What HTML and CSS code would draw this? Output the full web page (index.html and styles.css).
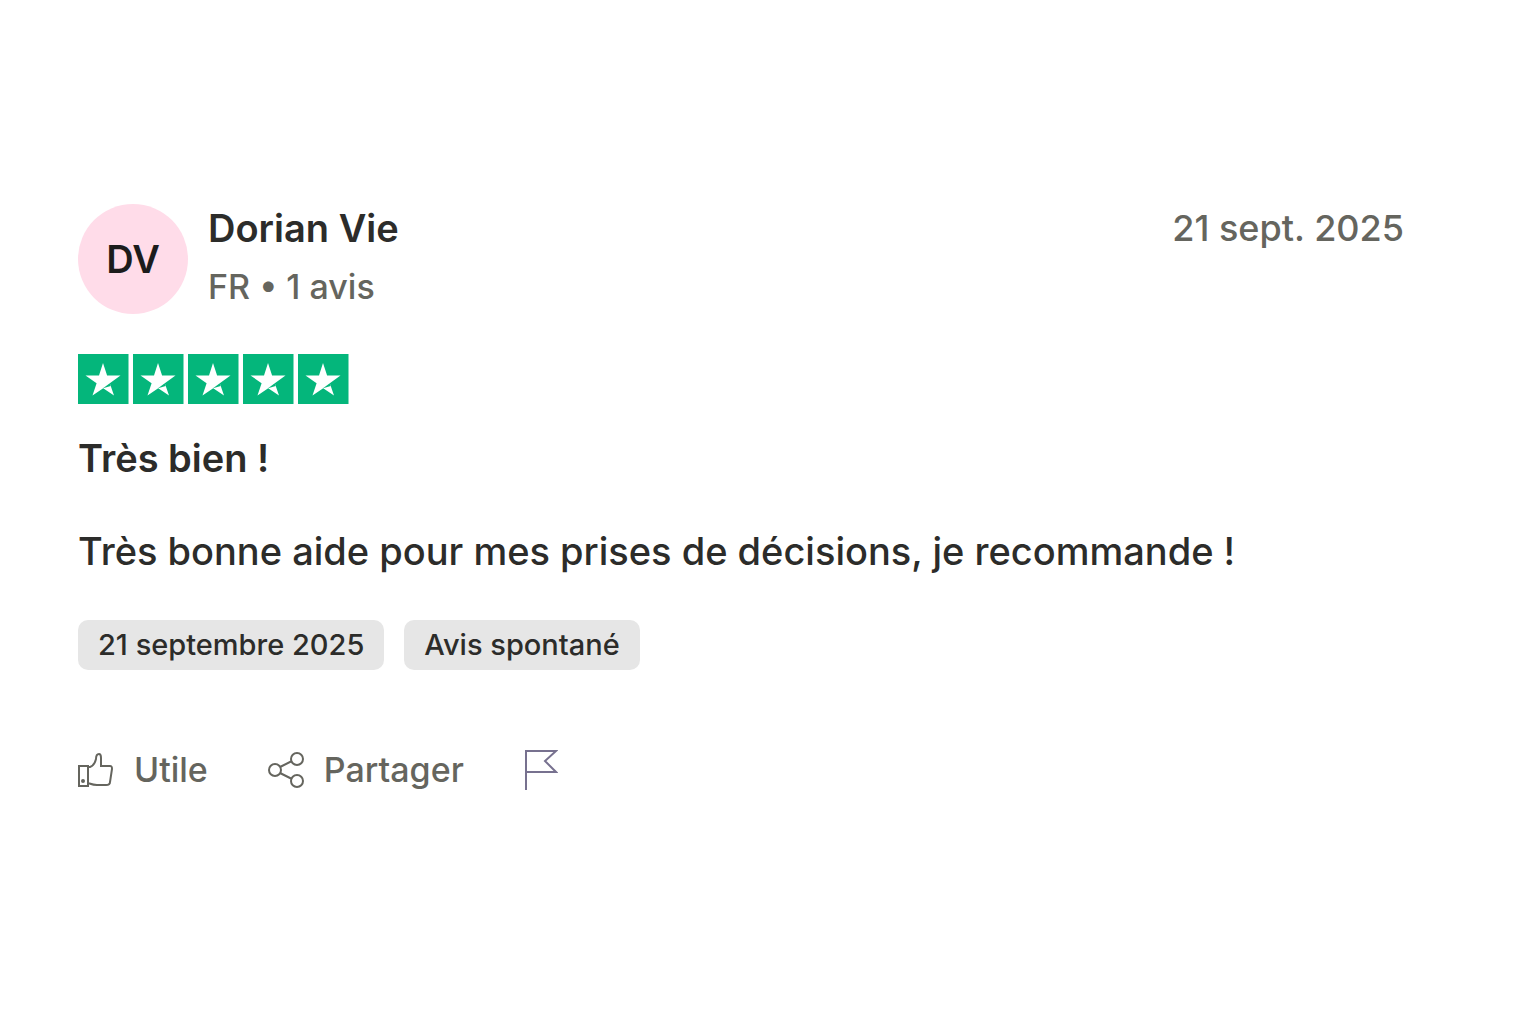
FILE: index.html
```html
<!DOCTYPE html>
<html lang="fr">
<head>
<meta charset="utf-8">
<meta name="viewport" content="width=device-width, initial-scale=1">
<title>Avis de Dorian Vie</title>
<link rel="stylesheet" href="styles.css">
</head>
<body>
<article class="review">
  <header class="review-header">
    <div class="avatar">DV</div>
    <div class="author">
      <span class="author-name">Dorian Vie</span>
      <span class="author-meta">FR • 1 avis</span>
    </div>
    <time class="date" datetime="2025-09-21">21 sept. 2025</time>
  </header>
  <svg class="stars" viewBox="0 0 271 50" role="img" aria-label="5 étoiles sur 5">
    <defs>
      <g id="star">
        <path fill="#04b67b" d="M0 0h50.500v50H0z"/>
        <path fill="#fff" d="M25 9L29.100 21.500H42.500L31.800 29.200L36 41.500L25.200 34.200L14.500 41.500L18.600 29.200L7.500 21.500H21z"/>
        <path fill="#04b67b" d="M25 34.300L32.700 32L31.800 29.200z"/>
      </g>
    </defs>
    <use href="#star"/><use href="#star" x="55"/><use href="#star" x="110"/><use href="#star" x="165"/><use href="#star" x="220"/>
  </svg>
  <h2 class="title">Très bien !</h2>
  <p class="body">Très bonne aide pour mes prises de décisions, je recommande !</p>
  <div class="tags">
    <span class="tag">21 septembre 2025</span>
    <span class="tag">Avis spontané</span>
  </div>
  <footer class="actions">
    <button class="action" type="button">
      <svg class="icon" viewBox="0 0 36 36"><path d="M1 14h9v20H1zM10 15h2c3-1 5-4 6-8 0-3 1-5 3-5s2 2 2 4v8h9c2 0 2 1 2 3l-2 13c0 2-2 3-4 3H19c-4 0-6-1-9-2"/><circle cx="5" cy="29" r="1"/></svg>
      Utile
    </button>
    <button class="action" type="button">
      <svg class="icon" viewBox="0 0 36 36"><circle cx="7" cy="18" r="6"/><circle cx="29" cy="7" r="6"/><circle cx="29" cy="29" r="6"/><path d="M12 15l12-6M12 21l12 6"/></svg>
      Partager
    </button>
    <button class="action" type="button" aria-label="Signaler">
      <svg class="flag" viewBox="0 0 34 42"><path d="M2 41V2h30L21 12l11 11H2"/></svg>
    </button>
  </footer>
</article>
</body>
</html>
```
FILE: styles.css
```css
* { box-sizing: border-box; }
body {
  margin: 0;
  background: #fff;
  color: #2c2c2a;
  font-family: Inter, "Liberation Sans", sans-serif;
  font-weight: 500;
}
.review { padding: 204px 132px 204px 78px; }
.review-header { display: flex; gap: 20px; }
.avatar {
  display: grid;
  place-items: center;
  width: 110px;
  height: 110px;
  border-radius: 50%;
  background: #ffdce9;
  color: #1c1c1c;
  font-size: 38px;
  font-weight: 600;
  line-height: 48px;
}
.author { display: flex; flex: 1; flex-direction: column; gap: 8px; }
.author-name { font-size: 38px; font-weight: 600; line-height: 48px; }
.author-meta { color: #65655e; font-size: 34px; line-height: 54px; }
.date { color: #65655e; font-size: 36px; line-height: 48px; }
.stars { display: block; width: 271px; height: 50px; margin-top: 40px; }
.title { margin: 28px 0 0; font-size: 38px; font-weight: 600; line-height: 52px; }
.body { margin: 40px 0 0; font-size: 38px; line-height: 54px; }
.tags { display: flex; gap: 20px; margin-top: 42px; }
.tag { padding: 0 20px; border-radius: 10px; background: #e6e6e6; font-size: 29px; line-height: 50px; }
.actions { display: flex; align-items: center; gap: 60px; margin-top: 76px; }
.action {
  display: flex;
  align-items: center;
  gap: 20px;
  padding: 0;
  border: 0;
  background: none;
  color: #65655e;
  font: inherit;
  font-size: 34px;
  line-height: 48px;
}
.icon, .flag { fill: none; stroke: #65655e; stroke-width: 2; }
.icon { width: 36px; height: 36px; }
.flag { width: 34px; height: 42px; stroke: #77718f; }
```
